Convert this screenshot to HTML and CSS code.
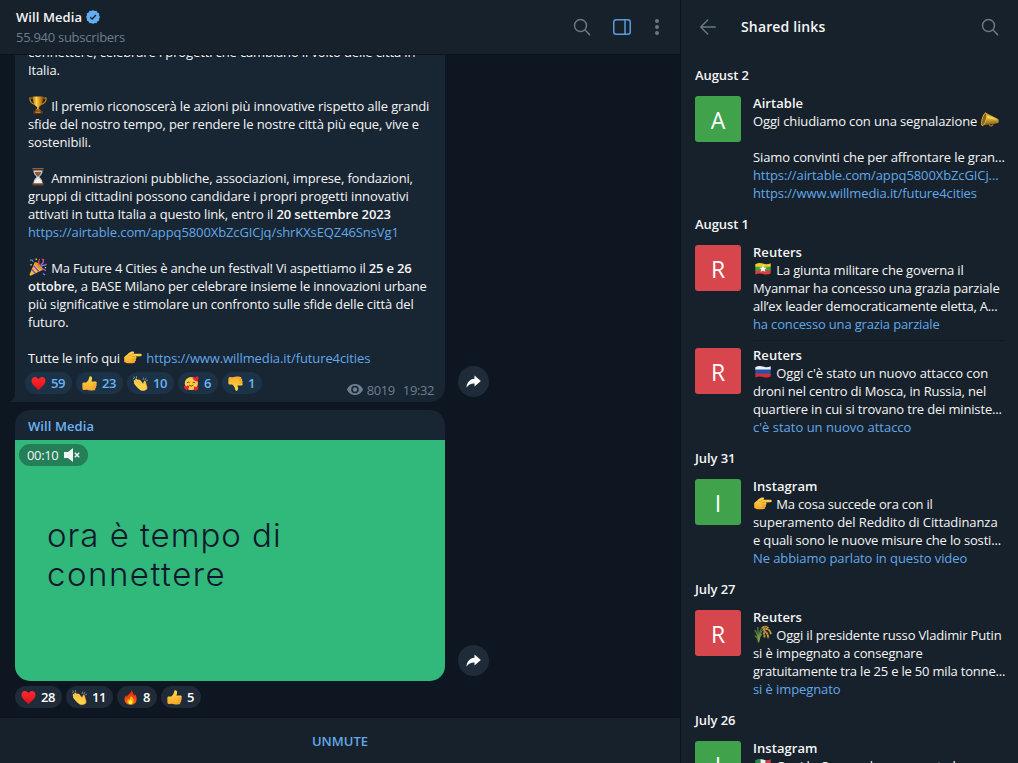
FILE: index.html
```html
<!DOCTYPE html>
<html lang="it">
<head>
<meta charset="utf-8">
<title>Will Media</title>
<link rel="stylesheet" href="styles.css">
</head>
<body>
<svg class="sprite" aria-hidden="true">
  <defs>
    <linearGradient id="gold" x1="0" x2="1" y1="0" y2="0"><stop offset="0" stop-color="#b9760c"/><stop offset=".35" stop-color="#ffd34d"/><stop offset=".7" stop-color="#d18b10"/><stop offset="1" stop-color="#8a4b06"/></linearGradient>
    <linearGradient id="brass" x1="0" x2="0" y1="0" y2="1"><stop offset="0" stop-color="#c99a22"/><stop offset=".4" stop-color="#e8c042"/><stop offset="1" stop-color="#7a5410"/></linearGradient>
    <linearGradient id="skin" x1="0" x2="0" y1="0" y2="1"><stop offset="0" stop-color="#ffd84f"/><stop offset="1" stop-color="#f7a928"/></linearGradient>
    <linearGradient id="red" x1="0" x2="0" y1="0" y2="1"><stop offset="0" stop-color="#ff2a2f"/><stop offset="1" stop-color="#e01018"/></linearGradient>
    <linearGradient id="flame" x1="0" x2="0" y1="0" y2="1"><stop offset="0" stop-color="#e8220c"/><stop offset="1" stop-color="#ff6a0c"/></linearGradient>
    <symbol id="heart" viewBox="0 0 18 18"><path fill="url(#red)" d="M9 17C6 13.5.6 10.4.6 5.7.6 3 2.500 1.200 4.800 1.200 6.700 1.200 8.200 2.300 9 4.200 9.800 2.300 11.300 1.200 13.200 1.200c2.300 0 4.200 1.800 4.200 4.500C17.400 10.400 12 13.500 9 17z"/></symbol>
    <symbol id="thumb" viewBox="0 0 18 18"><path fill="url(#skin)" d="M.4 9.300Q.6 7.800 2.200 7.800H5C7 6.400 8.200 4.100 8.600 1.800 8.900.1 10.600-.1 11.400.9c1.200 1.400.7 3.800-.1 5.800H16c2 0 2.200 2.400.9 2.900 1.200.6 1 2.400-.2 2.600.8.8.4 2.200-.7 2.400.5 1.400-.4 2.500-1.700 2.600-3 .4-6.200.5-8.400-.6L2.200 16.900Q.7 16.800.5 15z"/><path fill="none" stroke="#d98a1e" stroke-width=".6" d="M13.200 9.600h3.400M13 12.200h3.500M12.700 14.600h3"/></symbol>
    <symbol id="clap" viewBox="0 0 18 18"><path fill="#f2a32b" d="M6.500 5.200Q8.200 3.900 9.300 5.500l3.400 4.300.4-3c.1-1.800 1.900-1.700 2.200-.2l1.900 6.600c.7 3-2.700 4.900-5.400 3.400z"/><path fill="#ffd04a" d="M1 5.400c.8-1.200 1.900-.4 2.300.2L2.600 3.800c.8-1.500 2-.8 2.500.1l.7.9c.9-1.300 2-.6 2.500.2l3.900 5.200.3-2.500c.4-1.800 1.900-1.500 2 .1l1.600 5.600c.6 2.700-2.600 4.900-5.300 4.300C7.600 17 3.800 12.600 1.300 9 .8 8.200 1.200 7.500 1.700 7.400 1 6.800.7 6.100 1 5.400z"/><path fill="none" stroke="#e39b2a" stroke-width=".5" d="m3.300 5.600 4 5M5.500 4.700l3.700 4.800"/><path stroke="#9aa1a8" stroke-width=".9" stroke-linecap="round" d="m1 .9 1.200 1.500M4 .3l.2 1.600M.1 3l1.200.4M12.200 4.500l.4-2M14.300 4.600l1.300-2M16 5.800l1.500-.8"/></symbol>
    <symbol id="fire" viewBox="0 0 18 18"><path fill="url(#flame)" d="M9.700.2c3 2.400 2.200 4.500 4 6.500.5-.8.5-1.500.3-2.300 2 2.300 2.800 5 2.200 8.100-.7 3.400-3.600 5.300-7.200 5.300-4 0-7.200-2.600-7.200-6.300 0-2.300 1-4.100 2.100-5.200 0 1 .3 1.800 1 2.400C4.700 5.300 10.300 4.500 9.700.2z"/><path fill="#ffb30b" d="M9.400 6.200c.2 2.200 3.800 3.100 3.400 6.700-.2 2.600-1.700 4.300-3.900 4.300s-3.900-1.800-3.700-4c.1-1.200.7-2.100 1.300-2.700.3.900.7 1.400 1.400 1.600C7.700 10 9.700 9 9.400 6.200z"/><path fill="#fff04a" d="M8.900 10.700c.1 1.800 2.500 2 2.200 4.300-.2 1.400-1.100 2-2.200 2s-2.100-.8-2.100-2.200c0-1.200.6-1.700.9-2.300.3.400.5.600.8.600.2-.8.300-1.600.4-2.400z"/></symbol>
    <symbol id="love" viewBox="0 0 18 18"><circle cx="8.800" cy="9" r="7.900" fill="#ffcc45"/><path fill="none" stroke="#6b3b12" stroke-width="1.100" stroke-linecap="round" d="M3.700 8.100Q5 5.900 6.500 7.800M10.500 8.100q1.400-1.800 2.800 0M6.600 11.300q2.200 2 4.300 0"/><g fill="#f01f35"><path d="M14.600 6.600C12.600 5.300 9.900 4 10.700 1.900c.6-1.500 2.400-1.400 3.100.2C14.600.4 16.700 0 17.400 1.600c.8 1.900-1.200 3.600-2.800 5z"/><path d="M2.700 17.200C1.300 15.600-.8 14.300.1 12.300c.7-1.400 2.200-1.200 2.700.2.800-1.400 2.800-1.500 3.300 0 .7 2-1.700 3.500-3.400 4.700z"/><path d="M14 17.800c-1.200-1.500-2.900-2.700-2.100-4.400.6-1.200 2-1 2.400.2.700-1.200 2.600-1.300 3 .1.500 1.700-1.600 3-3.300 4.100z"/></g></symbol>
    <symbol id="trophy" viewBox="0 0 18 18"><path fill="none" stroke="#c98613" stroke-width="1.200" d="M4.400 2H.9c-.2 3.500 1.800 5.500 5 6.500M13.600 2h3.500c.2 3.500-1.800 5.500-5 6.500"/><path fill="url(#gold)" d="M3.800.6h10.400C14.200 6 13 9.500 9.900 11v2.500H8.100V11C5 9.500 3.800 6 3.800.6z"/><path fill="#a3620d" d="M6.800 13h4.400l.6 2H6.200z"/><path fill="#6c3512" d="M4.400 14.800h9.200v3H4.400z"/><path fill="#d59a22" d="M6.500 15.600h5v1.200h-5z"/></symbol>
    <symbol id="hourglass" viewBox="0 0 18 18"><path fill="#c5ced2" d="M4.300 2h9.400c0 3.500-1.500 5-3.400 7 1.900 1.800 3.400 3.500 3.400 7H4.300c0-3.500 1.500-5.200 3.400-7-1.900-2-3.400-3.500-3.400-7z"/><path fill="#8b573b" d="M5.600 4h6.800c-.5 2-1.800 3-2.900 4.500h-1C7.400 7 6.100 6 5.600 4z"/><path fill="#f3f0ec" d="M8.500 9.500h1c.5 2 3 2.500 3.200 5.500H5.300c.2-3 2.700-3.500 3.200-5.500z"/><path fill="#5a3525" d="M3.400.2h11.200v2.200H3.400zM3.400 15.600h11.200v2.200H3.400z"/><path fill="#9b6c52" d="M3.400.2h11.200v.8H3.400zM3.400 15.600h11.200v.7H3.400z"/></symbol>
    <symbol id="party" viewBox="0 0 18 18"><path fill="#f6bd36" d="M5.800 4.300 13.400 12 2 17.600c-1 .3-1.700-.5-1.300-1.400z"/><path stroke="#8d4ac8" stroke-width="1.400" d="m4.500 7.700 5.600 6M2.800 11.500l3.700 4"/><ellipse cx="9.600" cy="8.200" rx="1.900" ry="5.300" transform="rotate(-45 9.600 8.200)" fill="#e79a22"/><path fill="none" stroke="#ee4b68" stroke-width="1.200" d="M9.300 7.500C11 5.500 8.600 3.500 10.500 1M15 7.400l2.600-1.500M13 1l2 1"/><path fill="none" stroke="#4e8df2" stroke-width="1.300" d="M1 2.500Q3.400.8 4.100 3.800M10.500 8.700c2-2 4-.5 6.700-2M14 15.400l2 1.700"/><path fill="none" stroke="#c85bdb" stroke-width="1.200" d="M11.700 6.600q2.800-1 2.700-4.700M13 10.500l4 2.200"/><path fill="#f9ce4a" d="M6.500.6h1.400V2H6.500zM15.800 9h1.300v1.300h-1.300zM1.400 6.100h1.300v1.300H1.400z"/></symbol>
    <symbol id="point" viewBox="0 0 18 18"><path fill="url(#skin)" d="M.2 9C2 7.900 3.200 6.400 4.500 5.300 6 4.100 7.600 3.400 9.200 3.500c1.200.2 1 1.700 0 2.200l7.400.1c1.600.1 1.600 2.400 0 2.500l-5 .3c1.300.5 1.200 2-.1 2.300.9.700.5 2.100-.7 2.300.5.900 0 1.700-1 1.900-3 .5-6.400.3-8.300-.7L.2 14z"/><path fill="none" stroke="#d78319" stroke-width=".6" d="M5.200 7.600q2-.2 3.800-1.900M11.400 8.500H8.100M11.400 11H8M10.700 13.200H8"/></symbol>
    <symbol id="horn" viewBox="0 0 18 18"><path fill="none" stroke="#a8791b" stroke-width="1.200" d="M8 13.300q1.700 3.400 4.200.1"/><path fill="url(#brass)" d="M4.800 1.700 16.900 8c1.200.7 1 3.700-.3 4.200L1.600 14.600z"/><path fill="#f8da59" d="m5.300 4.200 11 4.800-11.500-2.500z"/><ellipse cx="3.100" cy="8.300" rx="2" ry="6.700" transform="rotate(16 3.100 8.300)" fill="#8a651a" stroke="#e2b43e" stroke-width=".8"/></symbol>
    <symbol id="rice" viewBox="0 0 18 18"><path fill="none" stroke="#557f35" stroke-width="1.500" d="M4.500 17.500Q4.800 10 .8 5.300M4.600 17.500Q4.500 9 7.500 3.500M4.800 17Q3.200 11 .8 11M5 15q.5-4 3-6"/><path fill="none" stroke="#85a84b" stroke-width=".8" d="M4.500 17Q4.200 8 3.800 2M5 16Q6 6 10.500 3.500"/><path fill="none" stroke="#c8983d" stroke-width="1.900" stroke-dasharray="2.500 .3" d="M7.800 3Q12 .3 14.300 3M9 4.800q6.500-3 8 4.700M9.600 6.300q4.200.3 4.600 7M9.300 7.500q1.700 2 1 5"/></symbol>
    <clipPath id="wave"><path d="M1.300 4.200Q5 2.300 9 3.600t7.700-.4v10.300q-3.700 1.600-7.700.4t-7.700.5z"/></clipPath>
    <symbol id="mm" viewBox="0 0 18 18"><g clip-path="url(#wave)"><path fill="#f6cb22" d="M0 0h18v7H0z"/><path fill="#39a642" d="M0 6.700h18V11H0z"/><path fill="#e33a3c" d="M0 10.600h18V18H0z"/></g><path fill="#fff" d="m9 5 1 2.600 2.800.1-2.200 1.700.8 2.700L9 10.600l-2.400 1.500.8-2.700-2.200-1.700L8 7.600z"/></symbol>
    <symbol id="ru" viewBox="0 0 18 18"><g clip-path="url(#wave)"><path fill="#edf0f2" d="M0 0h18v7H0z"/><path fill="#2452a9" d="M0 6.600h18V11H0z"/><path fill="#d32c3a" d="M0 10.500h18V18H0z"/></g></symbol>
    <symbol id="it" viewBox="0 0 18 18"><g clip-path="url(#wave)"><path fill="#258d4b" d="M0 0h6.500v18H0z"/><path fill="#eef0ef" d="M6.500 0h5.200v18H6.500z"/><path fill="#d83744" d="M11.700 0H18v18h-6.300z"/></g></symbol>
    <symbol id="search" viewBox="0 0 18 18"><g fill="none" stroke="currentColor" stroke-width="1.500" stroke-linecap="round"><circle cx="7.500" cy="7.500" r="6"/><path d="m12 12 4.600 4.600"/></g></symbol>
    <symbol id="share" viewBox="0 0 16 14"><path fill="#fff" d="M8.500.6 14.800 6 8.500 11.500V8.400C5.200 8.200 2.700 9.400.5 12.500.7 7.400 3.700 4.200 8.500 3.700z"/></symbol>
  </defs>
</svg>
<div class="app">
  <main class="chat">
    <header class="chat-header">
      <div class="chat-info">
        <h1 class="chat-name">Will Media
          <svg class="verified" viewBox="0 0 14 14"><path fill="#62aef3" d="m7 0 1.600 1.100 1.900-.3.800 1.800 1.900.8-.1 2L14 7l-.9 1.600.1 2-1.900.8-.8 1.800-1.900-.3L7 14l-1.600-1.100-1.900.3-.8-1.800-1.900-.8.100-2L0 7l.9-1.600-.1-2 1.900-.8.800-1.800 1.900.3z"/><path fill="none" stroke="#17212b" stroke-width="1.400" d="m4.200 7.200 2 1.900 3.700-4"/></svg>
        </h1>
        <p class="chat-sub">55.940 subscribers</p>
      </div>
      <nav class="chat-tools">
        <svg class="icon-search"><use href="#search"/></svg>
        <svg class="icon-panel" viewBox="0 0 18 16"><g fill="none" stroke="#5a9bdc" stroke-width="1.500"><rect x=".75" y=".75" width="16.500" height="14.500" rx="2.500"/><path d="M12 1v14"/></g></svg>
        <svg class="icon-dots" viewBox="0 0 4 16"><g fill="currentColor"><circle cx="2" cy="2" r="2"/><circle cx="2" cy="8" r="2"/><circle cx="2" cy="14" r="2"/></g></svg>
      </nav>
    </header>

    <section class="feed">
      <div class="message-row">
        <article class="bubble bubble-text">
          <p class="text">connettere, celebrare i progetti che cambiano il volto delle città in<br>Italia.<br><br><svg class="emoji"><use href="#trophy"/></svg> Il premio riconoscerà le azioni più innovative rispetto alle grandi<br>sfide del nostro tempo, per rendere le nostre città più eque, vive e<br>sostenibili.<br><br><svg class="emoji"><use href="#hourglass"/></svg> <span class="snug">Amministrazioni pubbliche, associazioni, imprese, fondazioni,</span><br><span class="loose">gruppi di cittadini possono candidare i propri progetti innovativi</span><br>attivati in tutta Italia a questo link, entro il <b>20 settembre 2023</b><br><a>https://airtable.com/appq5800XbZcGICjq/shrKXsEQZ46SnsVg1</a><br><br><svg class="emoji"><use href="#party"/></svg> <span class="tight">Ma Future 4 Cities è anche un festival! Vi aspettiamo il <b>25 e 26</b></span><br><span class="snug"><b>ottobre</b>, a BASE Milano per celebrare insieme le innovazioni urbane</span><br>più significative e stimolare un confronto sulle sfide delle città del<br>futuro.<br><br><span class="tight">Tutte le info qui</span> <svg class="emoji"><use href="#point"/></svg> <a>https://www.willmedia.it/future4cities</a></p>
          <footer class="bubble-footer">
            <div class="reactions">
              <span class="reaction"><svg><use href="#heart"/></svg>59</span>
              <span class="reaction"><svg><use href="#thumb"/></svg>23</span>
              <span class="reaction"><svg><use href="#clap"/></svg>10</span>
              <span class="reaction"><svg><use href="#love"/></svg>6</span>
              <span class="reaction"><svg class="flipped"><use href="#thumb"/></svg>1</span>
            </div>
            <div class="meta">
              <svg class="eye" viewBox="0 0 16 11"><path fill="currentColor" fill-rule="evenodd" d="M8 0c3.600 0 6.600 2.200 8 5.500C14.600 8.800 11.600 11 8 11S1.400 8.800 0 5.500C1.400 2.200 4.400 0 8 0zm0 1.700a3.800 3.800 0 1 0 0 7.600 3.800 3.800 0 0 0 0-7.600zm0 1.600a2.200 2.200 0 1 1 0 4.400 2.200 2.200 0 0 1 0-4.400z"/></svg>
              <span>8019</span><time>19:32</time>
            </div>
          </footer>
          <svg class="tail" viewBox="0 0 6 10"><path fill="#182533" d="M6 0v10H0Q6 8 6 0z"/></svg>
        </article>
        <button class="share"><svg><use href="#share"/></svg></button>
      </div>

      <div class="message-row">
        <article class="bubble bubble-video">
          <h2 class="author">Will Media</h2>
          <div class="video">
            <span class="duration">00:10
              <svg viewBox="0 0 16 14"><path fill="#f1f4f2" d="M0 4h4L9 0v14l-5-4H0z"/><path stroke="#f1f4f2" stroke-width="1.400" d="m10.800 4.700 4.400 4.500m0-4.500-4.400 4.500"/></svg>
            </span>
            <p class="caption"><span class="caption-line caption-first">ora è tempo di</span><span class="caption-line caption-second">connettere</span></p>
          </div>
        </article>
        <button class="share"><svg><use href="#share"/></svg></button>
      </div>
      <div class="reactions reactions-outside">
        <span class="reaction"><svg><use href="#heart"/></svg>28</span>
        <span class="reaction"><svg><use href="#clap"/></svg>11</span>
        <span class="reaction"><svg><use href="#fire"/></svg>8</span>
        <span class="reaction"><svg><use href="#thumb"/></svg>5</span>
      </div>
    </section>
    <button class="unmute">UNMUTE</button>
  </main>

  <aside class="panel">
    <header class="panel-header">
      <svg class="icon-back" viewBox="0 0 16 16"><path fill="none" stroke="currentColor" stroke-width="1.400" stroke-linecap="round" d="M15.300 8H1M7.700 1 .8 8l6.900 7"/></svg>
      <h2 class="panel-title">Shared links</h2>
      <svg class="icon-search"><use href="#search"/></svg>
    </header>
    <div class="links">
      <h3 class="date">August 2</h3>
      <div class="link-item"><span class="thumb green">A</span><div class="link-body"><b>Airtable</b><br>Oggi chiudiamo con una segnalazione <svg class="emoji"><use href="#horn"/></svg><br><br>Siamo convinti che per affrontare le gran...<br><a>https://airtable.com/appq5800XbZcGICj...</a><br><a>https://www.willmedia.it/future4cities</a></div></div>
      <h3 class="date">August 1</h3>
      <div class="link-item"><span class="thumb red">R</span><div class="link-body"><b>Reuters</b><br><svg class="emoji"><use href="#mm"/></svg> <span class="snug">La giunta militare che governa il</span><br><span class="snug">Myanmar ha concesso una grazia parziale</span><br><span class="tight">all’ex leader democraticamente eletta, A...</span><br><a class="snug">ha concesso una grazia parziale</a></div></div>
      <div class="link-item"><span class="thumb red">R</span><div class="link-body"><b>Reuters</b><br><svg class="emoji"><use href="#ru"/></svg> <span class="loose">Oggi c'è stato un nuovo attacco con</span><br><span class="snug">droni nel centro di Mosca, in Russia, nel</span><br><span class="snug">quartiere in cui si trovano tre dei ministe...</span><br><a class="natural">c'è stato un nuovo attacco</a></div></div>
      <h3 class="date">July 31</h3>
      <div class="link-item"><span class="thumb green">I</span><div class="link-body"><b>Instagram</b><br><svg class="emoji"><use href="#point"/></svg> <span class="tight">Ma cosa succede ora con il</span><br><span class="loose">superamento del Reddito di Cittadinanza</span><br><span class="snug">e quali sono le nuove misure che lo sosti...</span><br><a class="loose">Ne abbiamo parlato in questo video</a></div></div>
      <h3 class="date">July 27</h3>
      <div class="link-item"><span class="thumb red">R</span><div class="link-body"><b>Reuters</b><br><svg class="emoji"><use href="#rice"/></svg> <span class="snug">Oggi il presidente russo Vladimir Putin</span><br>si è impegnato a consegnare<br><span class="tight">gratuitamente tra le 25 e le 50 mila tonne...</span><br><a>si è impegnato</a></div></div>
      <h3 class="date">July 26</h3>
      <div class="link-item"><span class="thumb green">I</span><div class="link-body"><b>Instagram</b><br><svg class="emoji"><use href="#it"/></svg> Oggi la Camera ha approvato la</div></div>
    </div>
  </aside>
</div>
</body>
</html>
```
FILE: styles.css
```css
* { box-sizing: border-box; }
html, body { height: 100%; }
body {
  margin: 0;
  overflow: hidden;
  background: #0e1621;
  color: #f5f5f5;
  font: 13px/18px "Open Sans", "Noto Sans", sans-serif;
}
h1, h2, h3, p { margin: 0; font-size: 13px; font-weight: 600; }
b { font-weight: 600; }
button { border: 0; padding: 0; font: inherit; color: inherit; }
a { color: #62a8e8; letter-spacing: -.1px; }
svg { display: block; flex: none; }
.sprite { position: absolute; width: 0; height: 0; }
.tight { letter-spacing: -.19px; }
.snug { letter-spacing: -.16px; }
.loose { letter-spacing: -.08px; }
.natural { letter-spacing: 0; }

.app { display: grid; grid-template-columns: 680px 338px; height: 763px; }
.chat { display: grid; grid-template-rows: 55px minmax(0, 1fr) 46px; min-height: 0; }

.chat-header {
  display: flex;
  align-items: flex-start;
  justify-content: space-between;
  padding: 8px 21px 0 16px;
  background: #17212b;
  border-bottom: 1px solid #0c131b;
}
.chat-name { display: flex; align-items: center; gap: 4px; letter-spacing: .08px; }
.verified { width: 14px; height: 14px; }
.chat-sub { margin-top: 2px; font-weight: 400; letter-spacing: -.28px; color: #6c7e8e; }
.chat-tools { display: flex; align-items: center; margin-top: 10px; color: #6a7883; }
.icon-search { width: 18px; height: 18px; }
.icon-panel { width: 18px; height: 16px; margin-left: 22px; }
.icon-dots { width: 4px; height: 16px; margin-left: 24px; }

.feed {
  display: flex;
  flex-direction: column;
  justify-content: flex-end;
  overflow: hidden;
  padding: 0 0 9px 15px;
}
.message-row { display: flex; flex: none; align-items: flex-end; gap: 13px; }
.message-row + .message-row { margin-top: 8px; }
.bubble { width: 430px; background: #182533; }
.bubble-text { position: relative; padding: 6px 11px 8px 13px; border-radius: 0 0 15px 0; }
.text { font-weight: 400; letter-spacing: -.13px; white-space: nowrap; }
.emoji { display: inline-block; width: 18px; height: 18px; margin: -1px 1px 0; vertical-align: top; }
.bubble-footer { display: flex; justify-content: space-between; align-items: flex-start; margin: 5px 0 0 -3px; height: 22px; }
.tail { position: absolute; left: -6px; bottom: 0; width: 6px; height: 10px; }

.reactions { display: flex; gap: 4px; }
.reaction {
  display: flex;
  align-items: center;
  gap: 5px;
  height: 22px;
  padding: 0 7px 0 6px;
  border-radius: 11px;
  background: #1c3347;
  color: #6cb3f2;
  font-weight: 600;
  letter-spacing: -.43px;
}
.reaction svg { width: 15px; height: 15px; }
.reaction .flipped { transform: rotate(180deg) scaleX(-1); }
.reactions-outside { flex: none; margin-top: 5px; }
.reactions-outside .reaction { background: #1f2b38; color: #fff; }

.meta { display: flex; align-items: center; margin-top: 9px; letter-spacing: -.4px; color: #6d7f8f; }
.eye { width: 16px; height: 11px; margin: -2px 4px 0 0; }
.meta time { margin-left: 8px; }

.share {
  display: grid;
  place-items: center;
  width: 31px;
  height: 31px;
  margin-bottom: 5px;
  border-radius: 50%;
  background: #1f2b38;
}
.share svg { width: 16px; height: 14px; }

.bubble-video { overflow: hidden; border-radius: 15px; }
.author { height: 30px; padding: 7px 13px 0; letter-spacing: .08px; color: #6cb3f2; }
.video { height: 241px; padding: 4px; background: #31b97b; }
.duration {
  display: flex;
  align-items: center;
  gap: 6px;
  width: 69px;
  height: 22px;
  padding: 0 8px;
  border-radius: 11px;
  background: #247e58;
  letter-spacing: -.35px;
}
.duration svg { width: 16px; height: 14px; }
.caption {
  display: flex;
  flex-direction: column;
  align-items: flex-start;
  padding: 50px 0 0 28px;
  color: #10172c;
  font: 300 33px/39px Inter, sans-serif;
}
.caption-line { white-space: nowrap; }
.caption-first { letter-spacing: .97px; }
.caption-second { letter-spacing: 1.5px; }

.unmute { background: #17212b; border-top: 1px solid #0c131b; color: #62a8e8; font-weight: 600; }

.panel { display: flex; flex-direction: column; min-height: 0; overflow: hidden; background: #17212b; border-left: 1px solid #0c131b; }
.panel-header { display: flex; flex: none; align-items: center; height: 54px; padding: 0 19px; color: #6a7883; }
.icon-back { width: 16px; height: 16px; }
.panel-title { flex: 1; margin-left: 25px; color: #f5f5f5; font-size: 14px; letter-spacing: .15px; }
.links { padding: 0 14px; }
.date { padding: 13px 0 10px; letter-spacing: -.08px; }
.date:first-child { padding-top: 12px; }
.link-item { display: grid; grid-template-columns: 46px minmax(0, 1fr); gap: 12px; }
.link-item + .link-item { margin-top: 7px; }
.link-item + .link-item .link-body { padding-top: 5px; border-top: 1px solid #111a23; }
.link-item + .link-item .thumb { margin-top: 8px; }
.link-body { letter-spacing: -.13px; white-space: nowrap; }
.link-body b { letter-spacing: .05px; }
.thumb {
  display: grid;
  place-items: center;
  width: 46px;
  height: 46px;
  margin-top: 2px;
  padding-top: 1px;
  border-radius: 3px;
  color: #fff;
  font-size: 23px;
}
.green { background: #40a34c; }
.red { background: #d8464d; }
```
